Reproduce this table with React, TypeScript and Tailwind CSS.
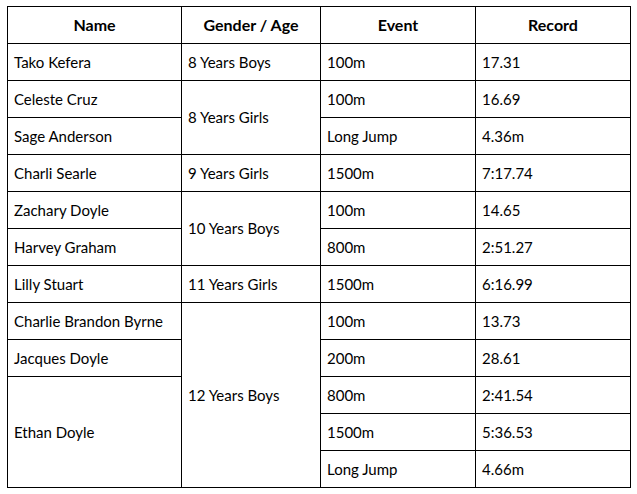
const rows: { name: string; nameSpan?: number; group?: string; groupSpan?: number; event: string; record: string }[] = [
  { name: "Tako Kefera", group: "8 Years Boys", groupSpan: 1, event: "100m", record: "17.31" },
  { name: "Celeste Cruz", group: "8 Years Girls", groupSpan: 2, event: "100m", record: "16.69" },
  { name: "Sage Anderson", event: "Long Jump", record: "4.36m" },
  { name: "Charli Searle", group: "9 Years Girls", groupSpan: 1, event: "1500m", record: "7:17.74" },
  { name: "Zachary Doyle", group: "10 Years Boys", groupSpan: 2, event: "100m", record: "14.65" },
  { name: "Harvey Graham", event: "800m", record: "2:51.27" },
  { name: "Lilly Stuart", group: "11 Years Girls", groupSpan: 1, event: "1500m", record: "6:16.99" },
  { name: "Charlie Brandon Byrne", group: "12 Years Boys", groupSpan: 5, event: "100m", record: "13.73" },
  { name: "Jacques Doyle", event: "200m", record: "28.61" },
  { name: "Ethan Doyle", nameSpan: 3, event: "800m", record: "2:41.54" },
  { name: "", nameSpan: 0, event: "1500m", record: "5:36.53" },
  { name: "", nameSpan: 0, event: "Long Jump", record: "4.66m" },
];

const cell = "border-r border-b border-black px-[6px] h-[37px] align-middle";

export default function App() {
  return (
    <div className="bg-white w-[637px] h-[494px] pt-[6px] pl-[7px] font-['Lato','Open_Sans',sans-serif] text-[15px] text-black">
      <table className="border-separate border-spacing-0 border-l border-t border-black table-fixed w-[624px]">
        <colgroup>
          <col className="w-[174px]" />
          <col className="w-[139px]" />
          <col className="w-[155px]" />
          <col className="w-[155px]" />
        </colgroup>
        <thead>
          <tr>
            {["Name", "Gender / Age", "Event", "Record"].map((h) => (
              <th key={h} className="border-r border-b border-black h-[37px] text-center font-bold text-[16px]">
                {h}
              </th>
            ))}
          </tr>
        </thead>
        <tbody>
          {rows.map((r, i) => (
            <tr key={i}>
              {r.nameSpan !== 0 && (
                <td className={cell} rowSpan={r.nameSpan ?? 1}>
                  {r.name}
                </td>
              )}
              {r.group && (
                <td className={cell} rowSpan={r.groupSpan}>
                  {r.group}
                </td>
              )}
              <td className={cell}>{r.event}</td>
              <td className={cell}>{r.record}</td>
            </tr>
          ))}
        </tbody>
      </table>
    </div>
  );
}
